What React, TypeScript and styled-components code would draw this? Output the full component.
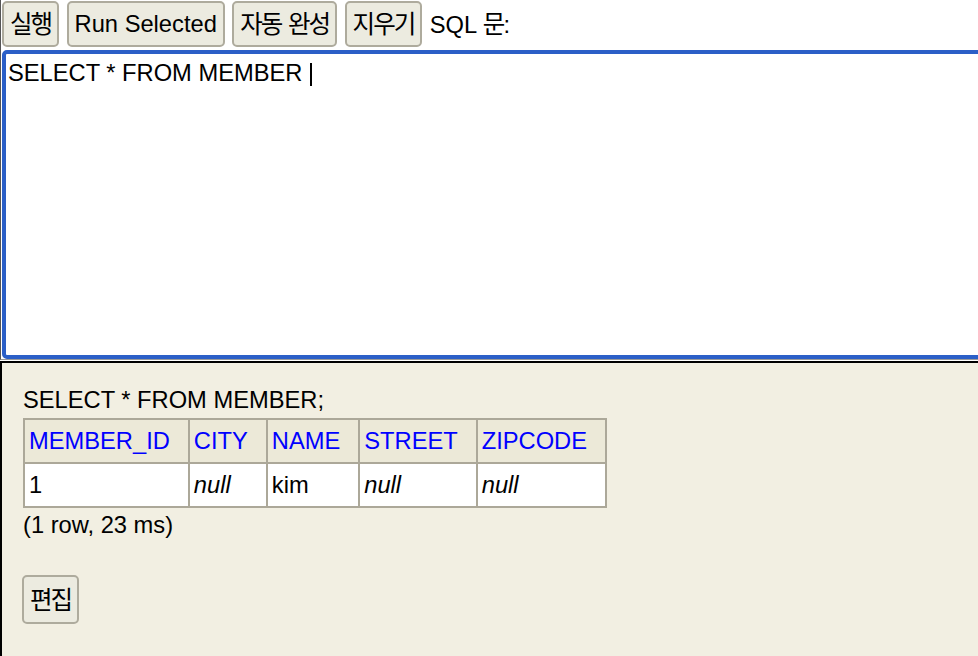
import styled, { createGlobalStyle } from 'styled-components'

const GlobalStyle = createGlobalStyle`
  html, body {
    margin: 0;
    padding: 0;
    height: 100%;
    overflow: hidden;
    background: #fff;
  }
  body {
    font-family: 'Liberation Sans', Arial, 'Noto Sans CJK KR', sans-serif;
    font-size: 23.7px;
    color: #000;
  }
`

const Page = styled.div`
  display: flex;
  flex-direction: column;
  height: 100vh;
  background: #fff;
`

const TopFrame = styled.div`
  height: 360px;
  box-sizing: border-box;
  padding: 1px 0 0 1px;
  border-left: 1px solid #555;
  border-bottom: 1px solid #9a9a9a;
  overflow: hidden;
  display: flex;
  flex-direction: column;
  flex-shrink: 0;
`

const ButtonBar = styled.div`
  display: flex;
  align-items: center;
  gap: 7.5px;
  height: 46px;
`

const Button = styled.button<{ $tall?: boolean }>`
  height: ${(p) => (p.$tall ? '49px' : '46px')};
  box-sizing: border-box;
  padding: 0 6px;
  border: 2px solid #aeab9d;
  border-radius: 5px;
  background: #ecebe0;
  color: #000;
  font-family: 'Liberation Sans', Arial, 'Noto Sans CJK KR', sans-serif;
  font-size: 23.7px;
  line-height: 27px;
  white-space: nowrap;
  cursor: pointer;
`

const Ko = styled.span`
  font-family: 'Noto Sans CJK KR', sans-serif;
  font-size: 24.5px;
  letter-spacing: -2px;
`

const Label = styled.span`
  line-height: 27px;
  white-space: nowrap;
`

const Editor = styled.div`
  margin-top: 3px;
  height: 310px;
  width: calc(100% + 8px);
  box-sizing: border-box;
  padding: 6px 2px 4px;
  border: 4px solid #2b5fc7;
  border-radius: 5px;
  background: #fff;
  line-height: 27px;
  white-space: pre;
`

const Caret = styled.span`
  display: inline-block;
  width: 2px;
  height: 23px;
  margin-left: 1px;
  background: #000;
  vertical-align: -5px;
`

const BottomFrame = styled.div`
  flex: 1;
  margin-top: 1px;
  border-top: 2px solid #000;
  border-left: 2px solid #000;
  background: #f2efe2;
  padding: 24px 0 0 21px;
  line-height: 27px;
`

const ResultTable = styled.table`
  margin-top: 4px;
  border-collapse: collapse;
  border: 2px solid #aca899;
`

const HeadCell = styled.th`
  border: 2px solid #aca899;
  background: #ece9d8;
  color: #0000ff;
  font-weight: normal;
  text-align: left;
  padding: 8px 18px 7px 4px;
  line-height: 27px;
  white-space: nowrap;
`

const Cell = styled.td<{ $null?: boolean }>`
  border: 2px solid #aca899;
  background: #fff;
  padding: 8px 18px 7px 4px;
  line-height: 27px;
  font-style: ${(p) => (p.$null ? 'italic' : 'normal')};
`

const Summary = styled.div`
  margin-top: 4px;
`

const EditRow = styled.div`
  margin-top: 36px;
  margin-left: -1px;
`

const columns = ['MEMBER_ID', 'CITY', 'NAME', 'STREET', 'ZIPCODE']
const rows: (string | null)[][] = [['1', null, 'kim', null, null]]

export default function App() {
  return (
    <Page>
      <GlobalStyle />
      <TopFrame>
        <ButtonBar>
          <Button><Ko>실행</Ko></Button>
          <Button>Run Selected</Button>
          <Button><Ko>자동</Ko> <Ko>완성</Ko></Button>
          <Button><Ko>지우기</Ko></Button>
          <Label>SQL <Ko>문</Ko>:</Label>
        </ButtonBar>
        <Editor>
          SELECT * FROM MEMBER <Caret />
        </Editor>
      </TopFrame>
      <BottomFrame>
        <div>SELECT * FROM MEMBER;</div>
        <ResultTable>
          <thead>
            <tr>
              {columns.map((c) => (
                <HeadCell key={c}>{c}</HeadCell>
              ))}
            </tr>
          </thead>
          <tbody>
            {rows.map((row, i) => (
              <tr key={i}>
                {row.map((v, j) => (
                  <Cell key={j} $null={v === null}>
                    {v === null ? 'null' : v}
                  </Cell>
                ))}
              </tr>
            ))}
          </tbody>
        </ResultTable>
        <Summary>(1 row, 23 ms)</Summary>
        <EditRow>
          <Button $tall><Ko>편집</Ko></Button>
        </EditRow>
      </BottomFrame>
    </Page>
  )
}
